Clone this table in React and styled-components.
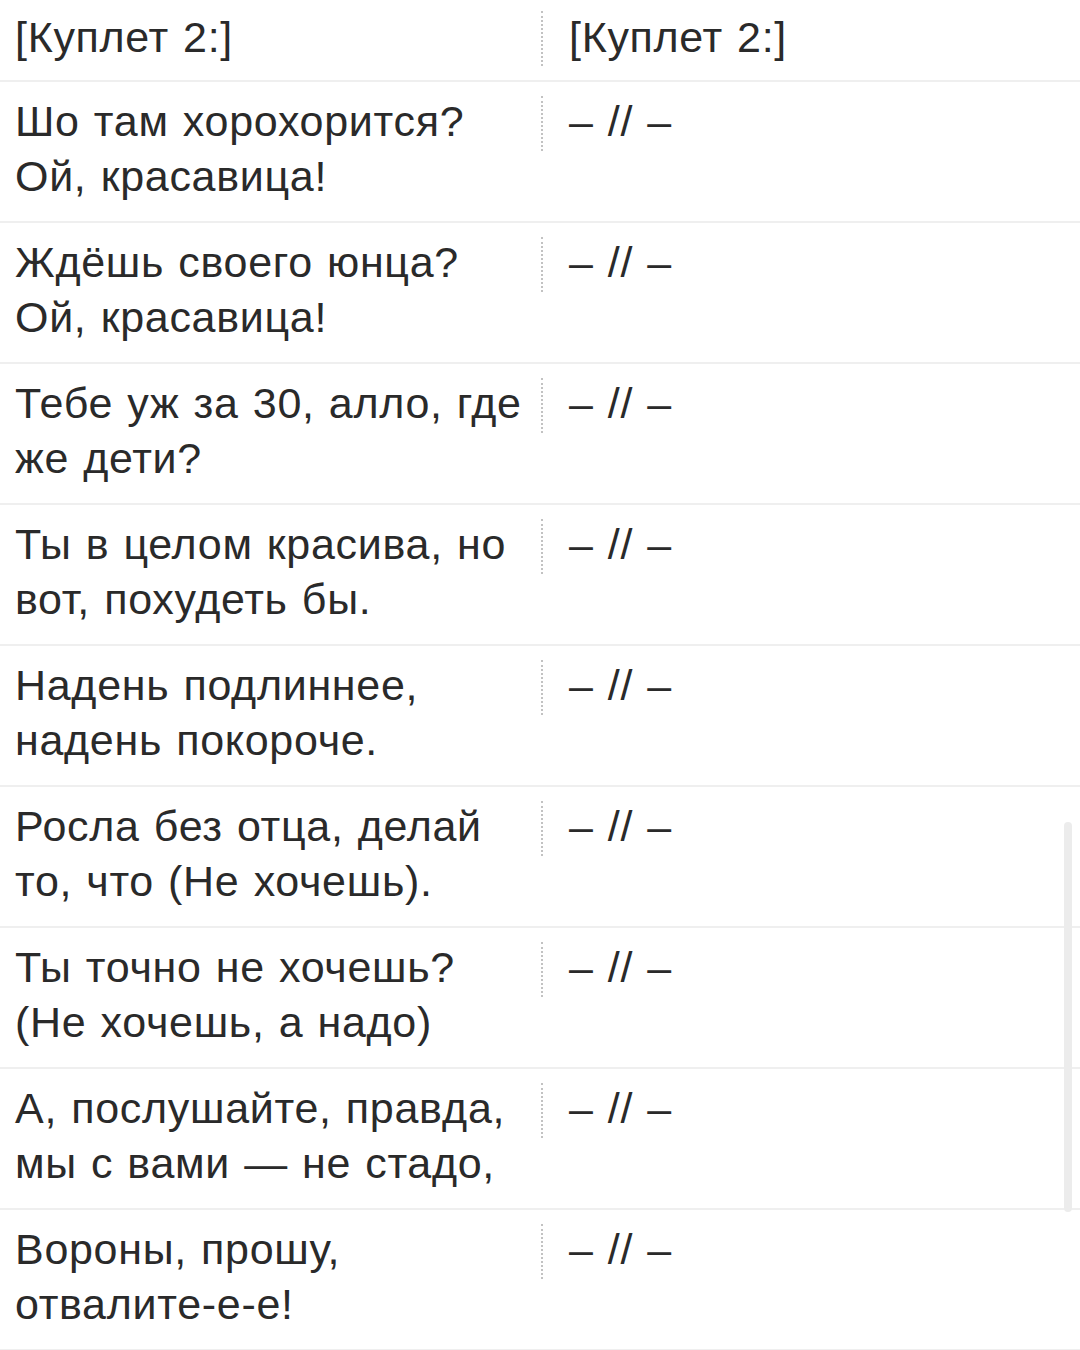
import React from 'react';
import styled, { createGlobalStyle } from 'styled-components';

const GlobalStyle = createGlobalStyle`
  html, body {
    margin: 0;
    padding: 0;
    background: #ffffff;
  }
  body {
    font-family: "Liberation Sans", Arial, sans-serif;
    color: #2a2a2a;
  }
`;

const Page = styled.div`
  position: relative;
  width: 1080px;
  height: 1350px;
  overflow: hidden;
  background: #ffffff;
`;

const Row = styled.div`
  display: grid;
  grid-template-columns: 540px 1fr;
  padding: ${props => props.$header ? '10px 0 14px' : '12px 0 17px'};
  border-bottom: 2px solid #efefef;
  font-size: 43px;
  letter-spacing: 0.7px;
  word-spacing: 1.5px;
  line-height: 55px;
`;

const Original = styled.div`
  padding: 0 14px 0 15px;
`;

const Translation = styled.div`
  display: flex;
  align-items: flex-start;
`;

const Divider = styled.span`
  flex: none;
  width: 0;
  height: 55px;
  margin: ${props => props.$header ? '1px' : '2px'} 0 0 1px;
  border-left: 2px dotted #c2c2c2;
`;

const TranslationText = styled.span`
  margin-left: 26px;
  white-space: nowrap;
`;

const Scrollbar = styled.div`
  position: absolute;
  right: 8px;
  top: 822px;
  width: 8px;
  height: 390px;
  border-radius: 4px;
  background: #ececec;
`;

const lines = [
  ['Шо там хорохорится?', 'Ой, красавица!'],
  ['Ждёшь своего юнца?', 'Ой, красавица!'],
  ['Тебе уж за 30, алло, где же дети?'],
  ['Ты в целом красива, но вот, похудеть бы.'],
  ['Надень подлиннее,', 'надень покороче.'],
  ['Росла без отца, делай то, что (Не хочешь).'],
  ['Ты точно не хочешь?', '(Не хочешь, а надо)'],
  ['А, послушайте, правда, мы с вами — не стадо,'],
  ['Вороны, прошу,', 'отвалите-е-е!'],
];

const App = () => {
  return (
    <>
      <GlobalStyle />
      <Page>
        <Row $header>
          <Original>[Куплет 2:]</Original>
          <Translation>
            <Divider $header />
            <TranslationText>[Куплет 2:]</TranslationText>
          </Translation>
        </Row>

        {lines.map((parts, i) => (
          <Row key={i}>
            <Original>
              {parts.map((p, j) => (
                <React.Fragment key={j}>
                  {j > 0 && <br />}
                  {p}
                </React.Fragment>
              ))}
            </Original>
            <Translation>
              <Divider />
              <TranslationText>– // –</TranslationText>
            </Translation>
          </Row>
        ))}

        <Scrollbar />
      </Page>
    </>
  );
};

export default App;
